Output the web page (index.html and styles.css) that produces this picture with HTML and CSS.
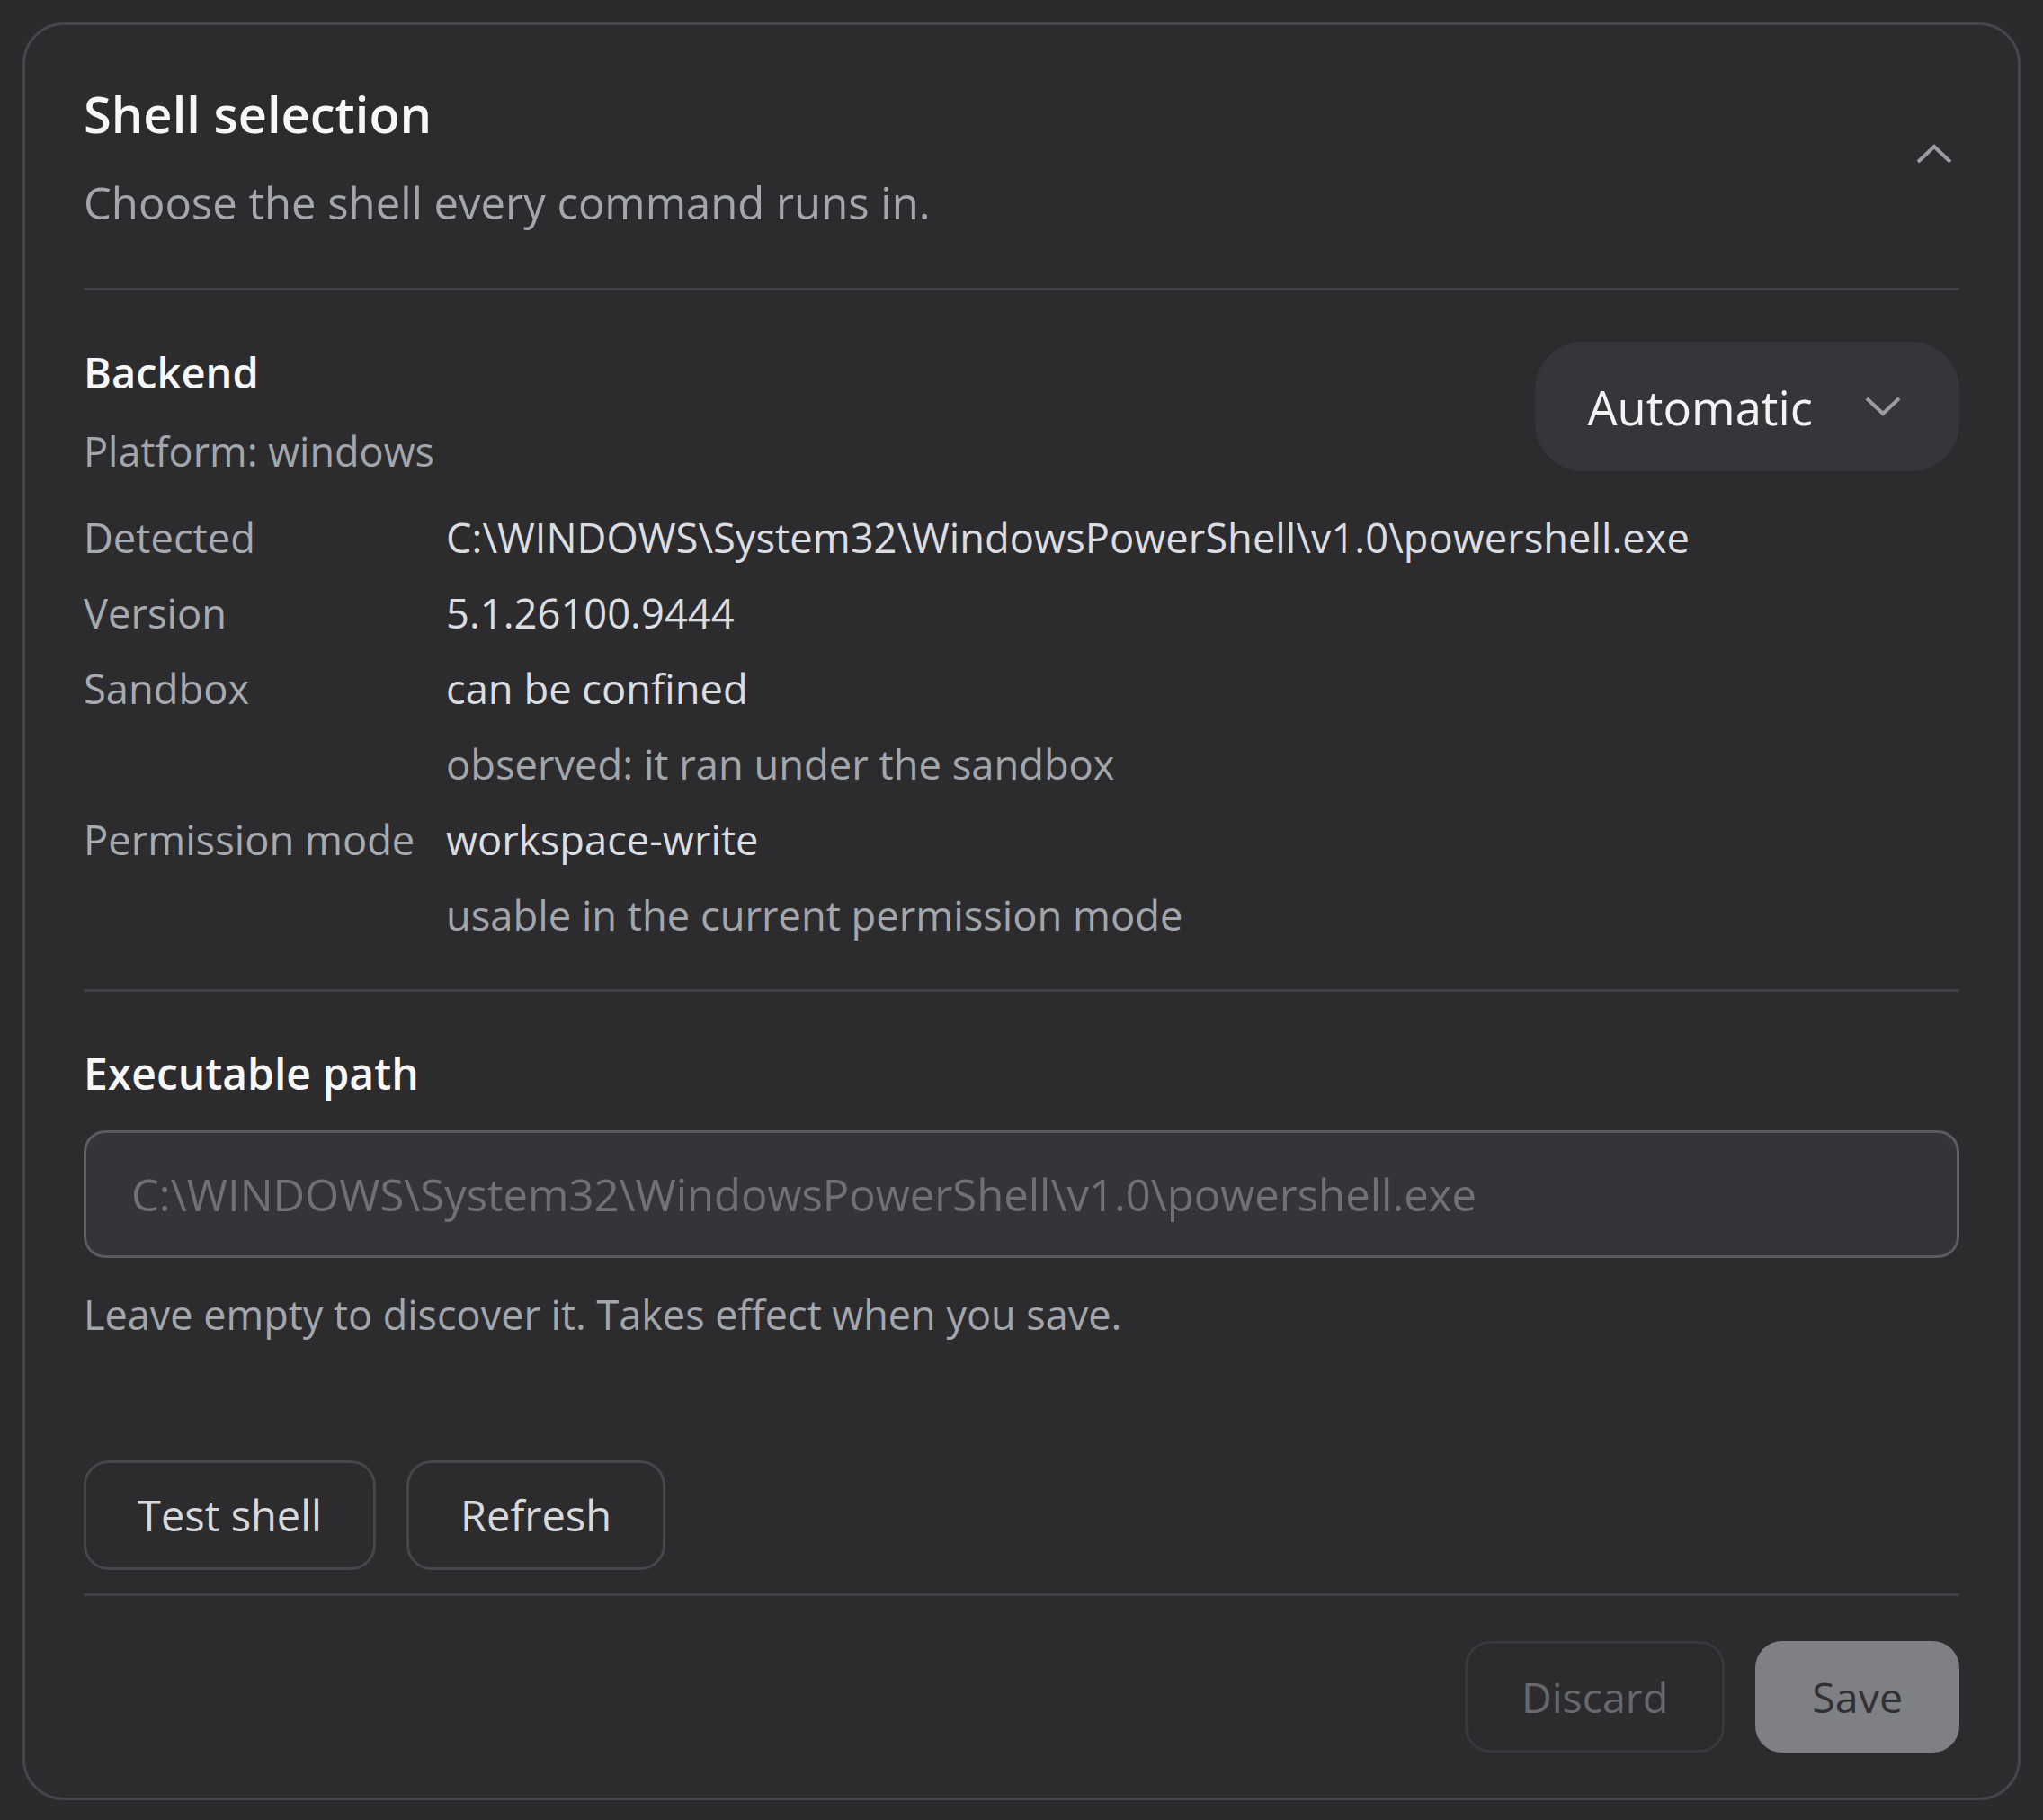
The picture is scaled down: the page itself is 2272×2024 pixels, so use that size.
FILE: index.html
```html
<!DOCTYPE html>
<html lang="en">
<head>
    <meta charset="UTF-8">
    <title>Shell selection</title>
    <link rel="stylesheet" href="styles.css">
</head>
<body>

    <section class="card">
        <!-- HEADER -->
        <div class="card-head">
            <div>
                <h1 class="card-title">Shell selection</h1>
                <p class="card-sub">Choose the shell every command runs in.</p>
            </div>
            <button type="button" class="collapse" aria-label="Collapse">
                <svg width="40" height="22" viewBox="0 0 40 22"><polyline points="2,20 20,3 38,20" fill="none" stroke="#9b9da2" stroke-width="4"/></svg>
            </button>
        </div>

        <!-- BACKEND -->
        <div class="block">
            <div class="backend-top">
                <div>
                    <h2 class="block-title">Backend</h2>
                    <p class="platform">Platform: windows</p>
                </div>
                <button type="button" class="select">
                    <span>Automatic</span>
                    <svg width="40" height="22" viewBox="0 0 40 22"><polyline points="2,2 20,19 38,2" fill="none" stroke="#9b9da2" stroke-width="4"/></svg>
                </button>
            </div>

            <div class="facts">
                <span class="key">Detected</span>
                <span class="val">C:\WINDOWS\System32\WindowsPowerShell\v1.0\powershell.exe</span>
                <span class="key">Version</span>
                <span class="val">5.1.26100.9444</span>
                <span class="key">Sandbox</span>
                <span class="val">can be confined</span>
                <span class="key"></span>
                <span class="val note">observed: it ran under the sandbox</span>
                <span class="key">Permission mode</span>
                <span class="val">workspace-write</span>
                <span class="key"></span>
                <span class="val note">usable in the current permission mode</span>
            </div>
        </div>

        <!-- EXECUTABLE PATH -->
        <div class="block exec">
            <h2 class="block-title">Executable path</h2>
            <input type="text" class="path-input" placeholder="C:\WINDOWS\System32\WindowsPowerShell\v1.0\powershell.exe">
            <p class="hint">Leave empty to discover it. Takes effect when you save.</p>

            <div class="actions">
                <button type="button" class="btn">Test shell</button>
                <button type="button" class="btn">Refresh</button>
            </div>
        </div>

        <div class="footer">
            <button type="button" class="btn btn-discard" disabled>Discard</button>
            <button type="button" class="btn btn-save" disabled>Save</button>
        </div>
    </section>

</body>
</html>
```

FILE: styles.css
```css
body {
    margin: 0;
    padding: 25px;
    background-color: #2b2b2e;
    font-family: 'Open Sans', 'Noto Sans', sans-serif;
    color: #dcdde0;
}
button, input {
    font-family: inherit;
}
.card {
    background: #2c2c2f;
    border: 3px solid #45464b;
    border-radius: 46px;
    padding: 0 65px 50px;
}
.card-head {
    display: flex;
    justify-content: space-between;
    align-items: center;
    padding: 60px 0 61px;
    border-bottom: 3px solid #404145;
}
.card-title {
    margin: 0;
    font-size: 56px;
    line-height: 76px;
    font-weight: 600;
    color: #f7f7f8;
}
.card-sub {
    margin: 27px 0 0;
    font-size: 49px;
    line-height: 68px;
    color: #a3a6ab;
}
.collapse {
    width: 56px;
    height: 56px;
    padding: 0;
    margin-top: -6px;
    border: none;
    background: none;
    display: flex;
    align-items: center;
    justify-content: center;
}
.block {
    padding: 57px 0 40px;
    border-bottom: 3px solid #404145;
}
.backend-top {
    display: flex;
    justify-content: space-between;
    align-items: flex-start;
}
.backend-top > div {
    padding-top: 2px;
}
.block-title {
    margin: 0;
    font-size: 47px;
    line-height: 64px;
    font-weight: 600;
    color: #f7f7f8;
}
.exec .block-title {
    font-size: 48px;
}
.platform {
    margin: 26px 0 0;
    font-size: 45px;
    line-height: 60px;
    color: #a3a6ab;
}
.select {
    display: flex;
    align-items: center;
    gap: 58px;
    height: 144px;
    padding: 0 65px 0 58px;
    border: none;
    border-radius: 54px;
    background: #35363a;
    color: #f3f3f4;
    font-size: 52.5px;
}
.facts {
    display: grid;
    grid-template-columns: 403px 1fr;
    grid-auto-rows: 84px;
    align-items: center;
    margin-top: 24px;
    font-size: 45.3px;
    line-height: 84px;
}
.key {
    color: #a7aaaf;
}
.val {
    color: #dcdde0;
}
.val.note {
    color: #a3a6ab;
}
.exec {
    padding: 59px 0 26px;
}
.path-input {
    display: block;
    box-sizing: border-box;
    width: 100%;
    height: 142px;
    margin-top: 31px;
    padding: 0 50px;
    background: #343538;
    border: 3px solid #5b5c60;
    border-radius: 24px;
    color: #dcdde0;
    font-size: 49px;
}
.path-input::placeholder {
    color: #707175;
}
.hint {
    margin: 33px 0 0;
    font-size: 45px;
    line-height: 60px;
    color: #a3a6ab;
}
.actions {
    display: flex;
    gap: 34px;
    margin-top: 132px;
}
.btn {
    height: 122px;
    padding: 0 57px;
    background: transparent;
    border: 3px solid #46474b;
    border-radius: 28px;
    color: #d8d9dc;
    font-size: 47px;
}
.footer {
    display: flex;
    justify-content: flex-end;
    gap: 34px;
    padding-top: 50px;
}
.btn-discard {
    height: 124px;
    padding: 0 60px;
    border-color: #38393d;
    color: #67686c;
    font-size: 46.5px;
}
.btn-save {
    height: 124px;
    padding: 0 60px;
    background: #7f8083;
    border-color: #7f8083;
    border-radius: 30px;
    color: #303134;
    font-size: 46.5px;
}
```
